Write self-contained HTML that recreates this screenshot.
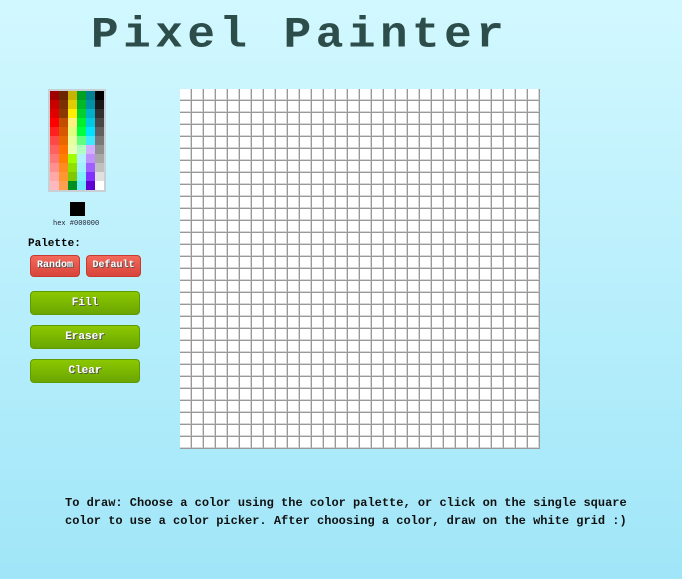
<!DOCTYPE html>
<html><head><style>
*{margin:0;padding:0;box-sizing:border-box}
html,body{width:682px;height:579px;overflow:hidden}
body{background:linear-gradient(#d2f8ff,#a0e6f8);position:relative;font-family:"Liberation Mono",monospace}
.title{position:absolute;left:91px;top:12px;font:bold 46px "Liberation Mono",monospace;letter-spacing:4.5px;color:#2d4d4a;line-height:46px;transform:scaleY(0.95)}
.pal{position:absolute;left:48px;top:89px;border:2px solid #c8d0d4;display:grid;grid-template-columns:repeat(6,9px);grid-template-rows:repeat(11,9px);grid-auto-flow:column}
.sw{position:absolute;left:70px;top:202px;width:15px;height:14px;background:#000}
.hex{position:absolute;left:53px;top:220px;font-size:7px;color:#223}
.lbl{position:absolute;left:28px;top:238px;font-weight:bold;font-size:11px;color:#000}
.btn{position:absolute;color:#fff;font-weight:bold;font-size:10px;text-align:center;border-radius:4px;text-shadow:1px 1px 0 #555}
.red{background:linear-gradient(#f26a5c,#d8443a);border:1px solid #c63a30;height:22px;line-height:20px;top:255px}
.grn{background:linear-gradient(#8cc800,#6aa600);border:1px solid #5f9a00;left:30px;width:110px;height:24px;line-height:22px;font-size:11px}
.grid{position:absolute;left:180px;top:89px;display:grid;grid-template-columns:repeat(30,12px);grid-template-rows:repeat(30,12px);background:#fff}
.grid div{border-right:1px solid #999;border-bottom:1px solid #999;box-shadow:inset -1px -1px 0 #d8d8d8}
.txt{position:absolute;left:65px;top:494px;font-weight:bold;font-size:12px;line-height:18px;color:#111}
</style></head><body>
<div class="title">Pixel Painter</div>
<div class="pal" id="pal"></div>
<div class="sw"></div>
<div class="hex">hex #000000</div>
<div class="lbl">Palette:</div>
<div class="btn red" style="left:30px;width:50px">Random</div>
<div class="btn red" style="left:86px;width:55px">Default</div>
<div class="btn grn" style="top:291px">Fill</div>
<div class="btn grn" style="top:325px">Eraser</div>
<div class="btn grn" style="top:359px">Clear</div>
<div class="grid" id="grid"></div>
<div class="txt">To draw: Choose a color using the color palette, or click on the single square<br>color to use a color picker. After choosing a color, draw on the white grid :)</div>
<script>
var c=["#a00000","#c80000","#e00000","#ff0000","#ff2020","#ff4848","#ff6060","#ff7878","#ff9090","#ffa8a8","#ffb8c0",
"#6a2800","#7a3000","#8a3a00","#c05000","#d85800","#e86800","#ff7000","#ff8000","#ff8c20","#ff9830","#ffa050",
"#c8b400","#e0cc00","#ffee00","#fff080","#e0ff80","#e8ffa0","#e8ffb0","#a0ff00","#90e000","#80c800","#009020",
"#00a020","#00b828","#00d030","#00f030","#00ff40","#60ff80","#b0ffc0","#b0f0ff","#a0f0ff","#80f0ff","#70e8ff",
"#008090","#0090a8","#00b0c8","#00c8e0","#00e0ff","#40e8ff","#d0b0ff","#c090ff","#a060ff","#8030ff","#6000d0",
"#000","#181818","#303030","#484848","#606060","#787878","#909090","#a8a8a8","#c0c0c0","#e0e0e0","#fff"];
var p=document.getElementById('pal'),h='';c.forEach(function(x){h+='<div style="background:'+x+'"></div>'});p.innerHTML=h;
var g='';for(var i=0;i<900;i++)g+='<div></div>';document.getElementById('grid').innerHTML=g;
</script>
</body></html>
